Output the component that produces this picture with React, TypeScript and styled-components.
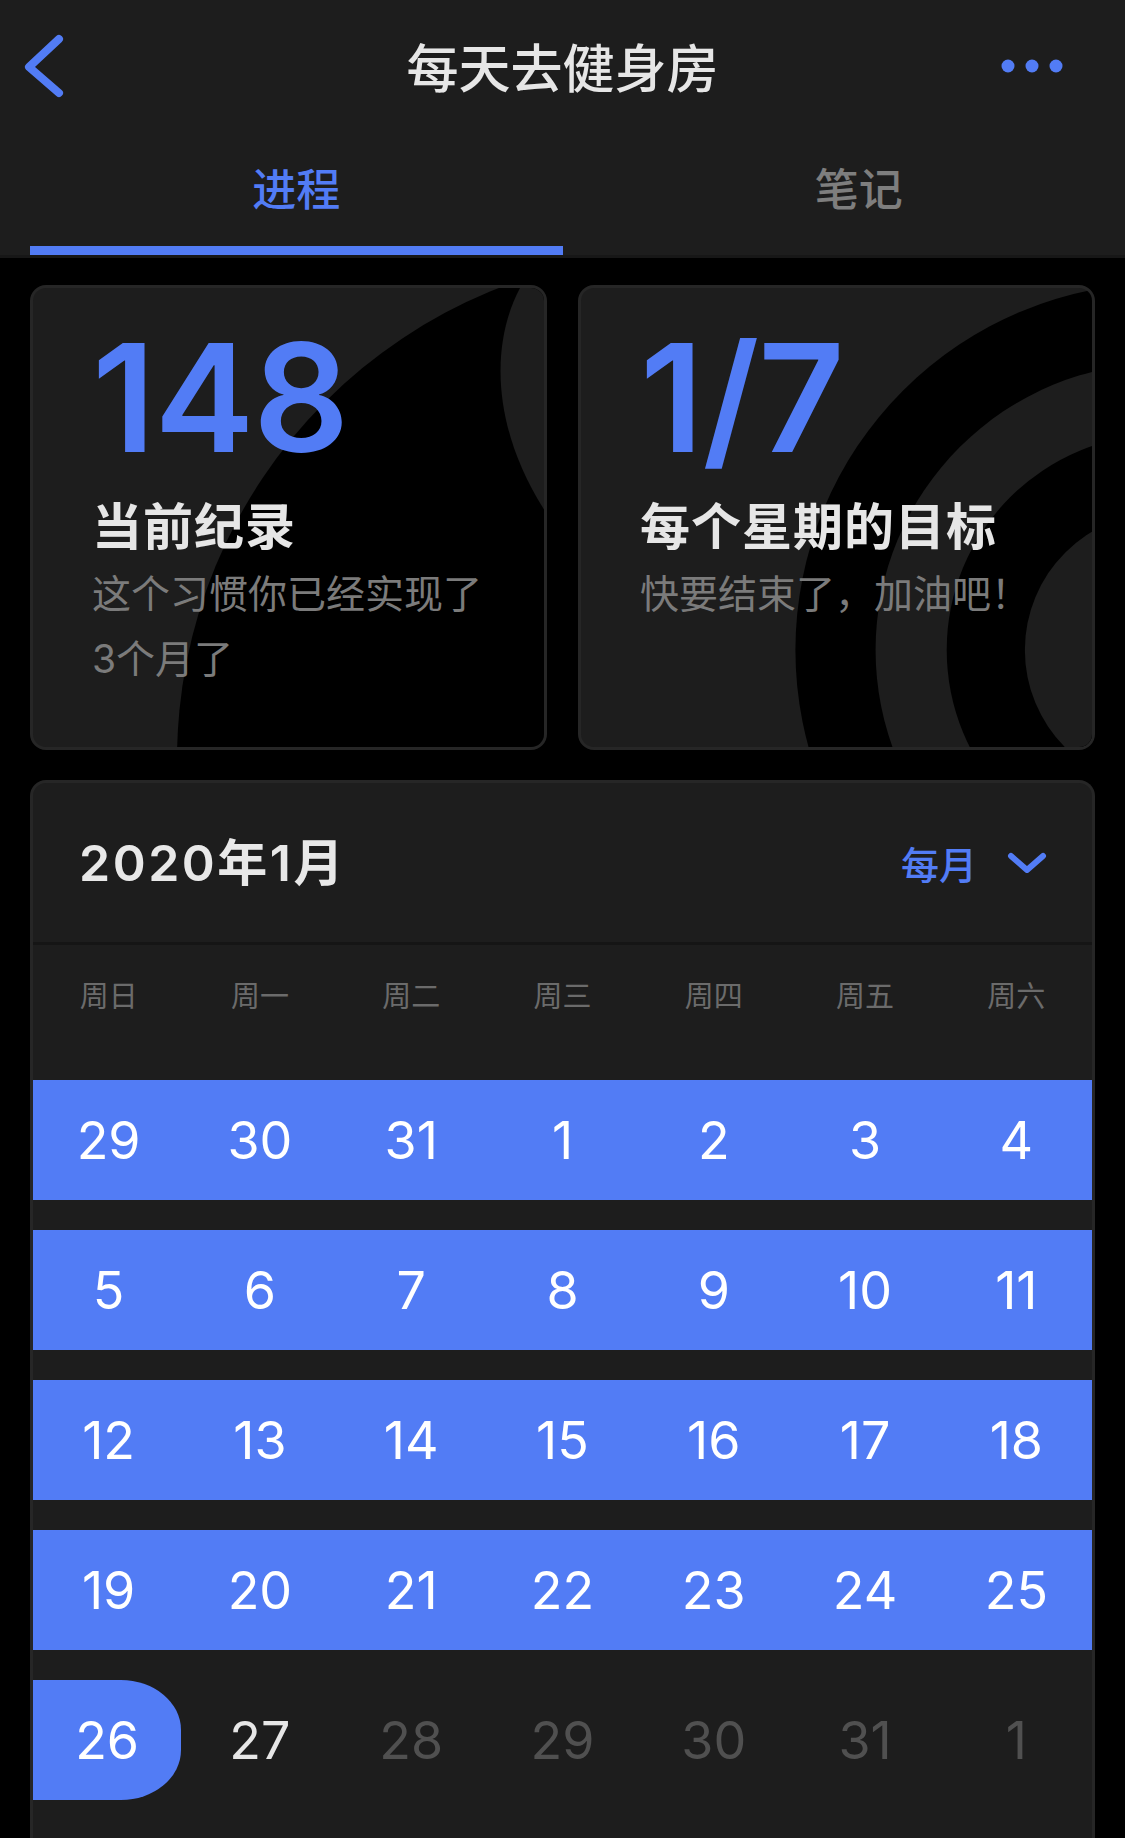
import React from "react";
import styled, { createGlobalStyle } from "styled-components";

const BLUE = "#527cf5";
const PANEL = "#1d1d1d";
const EDGE = "#262626";

const GlobalStyle = createGlobalStyle`
  html, body { margin: 0; padding: 0; background: #000; }
  body {
    font-family: Inter, "Noto Sans CJK SC", sans-serif;
    -webkit-font-smoothing: antialiased;
  }
  * { box-sizing: border-box; }
`;

const Page = styled.div`
  width: 1125px;
  min-height: 1838px;
  background: #000;
  display: flex;
  flex-direction: column;
`;

const Header = styled.header`
  background: ${PANEL};
  display: flex;
  flex-direction: column;
`;

const NavBar = styled.div`
  height: 132px;
  display: grid;
  grid-template-columns: 1fr auto 1fr;
  align-items: center;
  padding: 0 22px;
`;

const IconButton = styled.button<{ $end?: boolean }>`
  background: none;
  border: 0;
  padding: 0;
  display: flex;
  justify-self: ${(p) => (p.$end ? "end" : "start")};
  margin-right: ${(p) => (p.$end ? "39px" : "0")};
  cursor: pointer;
`;

const Title = styled.h1`
  margin: 0;
  font-family: "Noto Sans CJK SC", sans-serif;
  font-size: 52px;
  font-weight: 500;
  line-height: 60px;
  color: #e6e6e6;
`;

const TabBar = styled.nav`
  display: flex;
  border-bottom: 3px solid #171717;
`;

const Tab = styled.div<{ $active?: boolean }>`
  flex: 1;
  margin-left: 30px;
  height: 123px;
  padding-top: 30px;
  display: flex;
  flex-direction: column;
  align-items: center;
  font-family: "Noto Sans CJK SC", sans-serif;
  font-size: 44px;
  font-weight: 500;
  line-height: 50px;
  color: ${(p) => (p.$active ? BLUE : "#7e7e7e")};
`;

const TabIndicator = styled.div<{ $active?: boolean }>`
  margin-top: auto;
  align-self: stretch;
  height: 9px;
  background: ${(p) => (p.$active ? BLUE : "transparent")};
`;

const StatsRow = styled.section`
  display: grid;
  grid-template-columns: 1fr 1fr;
  gap: 31px;
  padding: 27px 30px 0;
`;

const StatCard = styled.div`
  position: relative;
  height: 465px;
  border: 3px solid ${EDGE};
  border-radius: 16px;
  background: ${PANEL};
  overflow: hidden;
  padding: 35px 40px 0 59px;
`;

const Decoration = styled.svg`
  position: absolute;
  inset: 0;
  width: 100%;
  height: 100%;
`;

const StatBody = styled.div`
  position: relative;
  display: flex;
  flex-direction: column;
`;

const BigNumber = styled.div`
  font-family: Inter, sans-serif;
  font-size: 150px;
  font-weight: 600;
  line-height: 150px;
  color: ${BLUE};
  letter-spacing: -1px;
`;

const StatTitle = styled.div`
  margin-top: 20px;
  font-family: "Noto Sans CJK SC", sans-serif;
  font-size: 50px;
  font-weight: 700;
  line-height: 60px;
  letter-spacing: 1px;
  color: #e6e6e6;
`;

const StatDesc = styled.div`
  margin-top: 8px;
  font-family: Inter, "Noto Sans CJK SC", sans-serif;
  font-size: 39px;
  font-weight: 400;
  line-height: 65px;
  color: #7b7b7b;
`;

const CalendarCard = styled.section`
  margin: 30px 30px 0;
  border: 3px solid ${EDGE};
  border-bottom: 0;
  border-radius: 16px 16px 0 0;
  background: ${PANEL};
  padding-bottom: 60px;
`;

const CalHeader = styled.div`
  height: 159px;
  display: flex;
  align-items: center;
  justify-content: space-between;
  padding: 0 43px 0 46px;
`;

const MonthTitle = styled.div`
  font-family: Inter, "Noto Sans CJK SC", sans-serif;
  font-size: 50px;
  font-weight: 600;
  line-height: 60px;
  letter-spacing: 2.5px;
  color: #e8e8e8;
`;

const ModeToggle = styled.div`
  display: flex;
  align-items: center;
  gap: 28px;
  font-family: "Noto Sans CJK SC", sans-serif;
  font-size: 38px;
  font-weight: 500;
  line-height: 46px;
  color: ${BLUE};
`;

const Divider = styled.div`
  height: 3px;
  background: #151515;
`;

const WeekHeader = styled.div`
  display: grid;
  grid-template-columns: repeat(7, 1fr);
  height: 135px;
  padding-top: 34px;
`;

const WeekdayLabel = styled.div`
  text-align: center;
  font-family: "Noto Sans CJK SC", sans-serif;
  font-size: 29px;
  line-height: 30px;
  color: #6b6b6b;
`;

const Weeks = styled.div`
  display: flex;
  flex-direction: column;
  gap: 30px;
`;

const WeekRow = styled.div<{ $filled?: boolean }>`
  display: grid;
  grid-template-columns: repeat(7, 1fr);
  height: 120px;
  background: ${(p) => (p.$filled ? BLUE : "transparent")};
`;

type Tone = "on" | "plain" | "muted";

const DayCell = styled.div<{ $tone: Tone; $pill?: boolean }>`
  display: flex;
  align-items: center;
  justify-content: center;
  font-family: Inter, sans-serif;
  font-size: 52px;
  font-weight: 400;
  color: ${(p) =>
    p.$tone === "on" ? "#ffffff" : p.$tone === "plain" ? "#e6e6e6" : "#505050"};
  background: ${(p) => (p.$pill ? BLUE : "transparent")};
  border-radius: ${(p) => (p.$pill ? "0 60px 60px 0 / 0 50px 50px 0" : "0")};
  margin-right: ${(p) => (p.$pill ? "3px" : "0")};
`;

const weekdays = ["周日", "周一", "周二", "周三", "周四", "周五", "周六"];

type Day = { n: number; tone: Tone; pill?: boolean };

const fullWeeks: number[][] = [
  [29, 30, 31, 1, 2, 3, 4],
  [5, 6, 7, 8, 9, 10, 11],
  [12, 13, 14, 15, 16, 17, 18],
  [19, 20, 21, 22, 23, 24, 25],
];

const lastWeek: Day[] = [
  { n: 26, tone: "on", pill: true },
  { n: 27, tone: "plain" },
  { n: 28, tone: "muted" },
  { n: 29, tone: "muted" },
  { n: 30, tone: "muted" },
  { n: 31, tone: "muted" },
  { n: 1, tone: "muted" },
];

export default function App() {
  return (
    <Page>
      <GlobalStyle />
      <Header>
        <NavBar>
          <IconButton aria-label="返回">
            <svg width="44" height="70" viewBox="0 0 44 70">
              <polyline
                points="37,8 7,36 37,62"
                fill="none"
                stroke={BLUE}
                strokeWidth="8"
                strokeLinecap="round"
                strokeLinejoin="round"
              />
            </svg>
          </IconButton>
          <Title>每天去健身房</Title>
          <IconButton $end aria-label="更多">
            <svg width="64" height="16" viewBox="0 0 64 16">
              <circle cx="8" cy="8" r="6.5" fill={BLUE} />
              <circle cx="32" cy="8" r="6.5" fill={BLUE} />
              <circle cx="56" cy="8" r="6.5" fill={BLUE} />
            </svg>
          </IconButton>
        </NavBar>
        <TabBar>
          <Tab $active>
            进程
            <TabIndicator $active />
          </Tab>
          <Tab>
            笔记
            <TabIndicator />
          </Tab>
        </TabBar>
      </Header>

      <StatsRow>
        <StatCard>
          <Decoration viewBox="0 0 511 459" preserveAspectRatio="none">
            <circle cx="651" cy="472" r="507" fill="#000" />
            <path d="M487 0 C455 60 460 150 520 235 L520 0 Z" fill={PANEL} />
          </Decoration>
          <StatBody>
            <BigNumber>148</BigNumber>
            <StatTitle>当前纪录</StatTitle>
            <StatDesc>
              这个习惯你已经实现了
              <br />
              3个月了
            </StatDesc>
          </StatBody>
        </StatCard>
        <StatCard>
          <Decoration viewBox="0 0 510 459" preserveAspectRatio="none">
            <circle cx="581" cy="362" r="367" fill="#000" />
            <circle cx="581" cy="362" r="287" fill={PANEL} />
            <circle cx="581" cy="362" r="216" fill="#000" />
            <circle cx="581" cy="362" r="138" fill={PANEL} />
          </Decoration>
          <StatBody>
            <BigNumber>1/7</BigNumber>
            <StatTitle>每个星期的目标</StatTitle>
            <StatDesc>快要结束了，加油吧！</StatDesc>
          </StatBody>
        </StatCard>
      </StatsRow>

      <CalendarCard>
        <CalHeader>
          <MonthTitle>2020年1月</MonthTitle>
          <ModeToggle>
            每月
            <svg width="44" height="24" viewBox="0 0 44 24">
              <polyline
                points="6,5 22,19 38,5"
                fill="none"
                stroke={BLUE}
                strokeWidth="6"
                strokeLinecap="round"
                strokeLinejoin="round"
              />
            </svg>
          </ModeToggle>
        </CalHeader>
        <Divider />
        <WeekHeader>
          {weekdays.map((w) => (
            <WeekdayLabel key={w}>{w}</WeekdayLabel>
          ))}
        </WeekHeader>
        <Weeks>
          {fullWeeks.map((week, i) => (
            <WeekRow $filled key={i}>
              {week.map((n, j) => (
                <DayCell $tone="on" key={j}>
                  {n}
                </DayCell>
              ))}
            </WeekRow>
          ))}
          <WeekRow>
            {lastWeek.map((d, j) => (
              <DayCell $tone={d.tone} $pill={d.pill} key={j}>
                {d.n}
              </DayCell>
            ))}
          </WeekRow>
        </Weeks>
      </CalendarCard>
    </Page>
  );
}
